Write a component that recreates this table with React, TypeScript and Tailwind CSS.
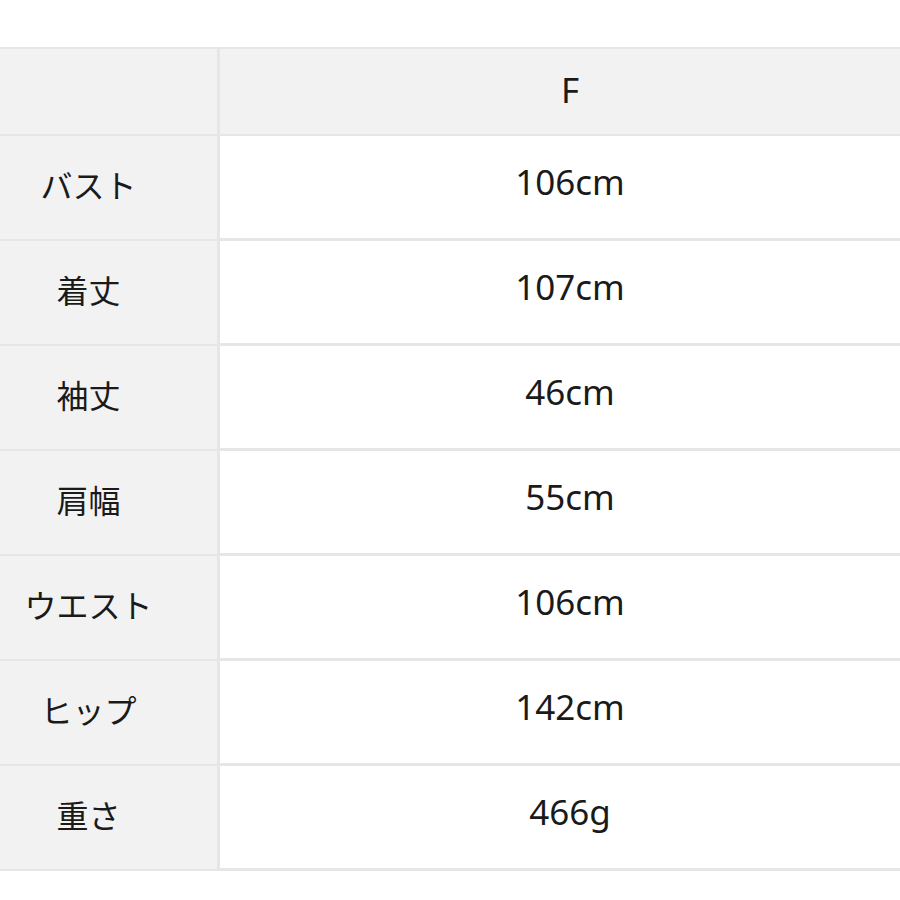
import React from "react";

const rows: [string, string][] = [
  ["バスト", "106cm"],
  ["着丈", "107cm"],
  ["袖丈", "46cm"],
  ["肩幅", "55cm"],
  ["ウエスト", "106cm"],
  ["ヒップ", "142cm"],
  ["重さ", "466g"],
];

export default function App() {
  return (
    <div className="w-[900px] h-[900px] bg-white pt-[47px] overflow-hidden text-[#1a1a1a]">
      <div className="grid grid-cols-[220px_1fr] border-t-2 border-[#e6e6e6]">
        <div className="h-[87px] bg-[#f2f2f2] border-r-[3px] border-b-2 border-[#e6e6e6]" />
        <div className="h-[87px] bg-[#f2f2f2] border-b-2 border-[#e6e6e6] flex items-center justify-center pl-[20px]">
          <span className="text-[35px] leading-none font-['Noto_Sans',sans-serif] -mt-1">F</span>
        </div>
        {rows.map(([k, v]) => (
          <React.Fragment key={k}>
            <div className="h-[105px] bg-[#f2f2f2] border-r-[3px] border-b-2 border-[#e6e6e6] flex items-center justify-center pr-[40px] pb-[7px]">
              <span className="text-[32px] leading-none font-['Noto_Sans_CJK_JP',sans-serif]">{k}</span>
            </div>
            <div className="h-[105px] bg-white border-b-[3px] border-[#e6e6e6] flex items-center justify-center pl-[20px] pb-[8px]">
              <span className="text-[35px] leading-none font-['Noto_Sans',sans-serif] -mt-1">{v}</span>
            </div>
          </React.Fragment>
        ))}
      </div>
    </div>
  );
}
